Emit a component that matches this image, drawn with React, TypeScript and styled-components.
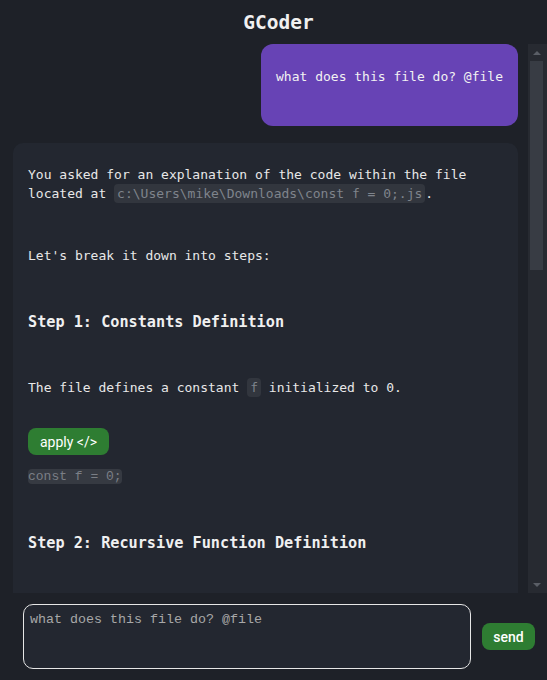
import React from "react";
import styled, { createGlobalStyle } from "styled-components";

const GlobalStyle = createGlobalStyle`
  html, body { margin: 0; padding: 0; height: 100%; background: #1e2128; }
  #root { height: 100%; }
`;

const Page = styled.div`
  height: 100vh;
  display: flex;
  flex-direction: column;
  font-family: "DejaVu Sans Mono", monospace;
  color: #e8e8e8;
  background: #1e2128;
`;

const Title = styled.h1`
  margin: 0;
  height: 44px;
  padding-left: 10px;
  display: flex;
  align-items: center;
  justify-content: center;
  font-size: 19.5px;
  font-weight: bold;
  color: #f0f0f0;
`;

const ChatRow = styled.div`
  flex: 1;
  min-height: 0;
  display: flex;
`;

const Messages = styled.div`
  flex: 1;
  min-width: 0;
  overflow-y: auto;
  scrollbar-width: none;
  &::-webkit-scrollbar { display: none; }
  padding: 0 10px 0 13px;
  display: flex;
  flex-direction: column;
  gap: 17px;
`;

const ScrollBar = styled.div`
  width: 19px;
  flex-shrink: 0;
  display: flex;
  flex-direction: column;
  background: #272a31;
`;

const ScrollArrow = styled.div<{ $down?: boolean }>`
  height: 17px;
  flex-shrink: 0;
  display: flex;
  align-items: center;
  justify-content: center;
  padding-right: 1px;
  &::after {
    content: "";
    width: 0;
    height: 0;
    border-left: 4px solid transparent;
    border-right: 4px solid transparent;
    ${(p) =>
      p.$down
        ? "border-top: 4px solid #5a5e66;"
        : "border-bottom: 4px solid #5a5e66;"}
  }
`;

const ScrollTrack = styled.div`
  flex: 1;
  padding: 0 4px 0 2px;
`;

const ScrollThumb = styled.div`
  height: 209px;
  background: #383c44;
`;

const UserBubble = styled.div`
  flex-shrink: 0;
  align-self: flex-end;
  white-space: nowrap;
  padding: 23px 15px 40px;
  background: #6743b5;
  border-radius: 12px;
  font-size: 13px;
  line-height: 19px;
  color: #f2f2f2;
`;

const BotBubble = styled.div`
  flex-shrink: 0;
  background: #232730;
  border-radius: 10px;
  padding: 22px 15px;
  font-size: 13px;
  line-height: 19px;
`;

const Para = styled.p<{ $gap?: number }>`
  margin: ${(p) => p.$gap ?? 43}px 0 0;
  &:first-child { margin-top: 0; }
`;

const Heading = styled.h3<{ $gap?: number }>`
  margin: ${(p) => p.$gap ?? 46}px 0 0;
  font-size: 15.2px;
  line-height: 22px;
  font-weight: bold;
  color: #f0f0f0;
`;

const InlineCode = styled.code`
  font-family: "DejaVu Sans Mono", monospace;
  font-size: 13px;
  background: #32363e;
  color: #7f848c;
  padding: 2px 3px;
  border-radius: 4px;
`;

const ActionButton = styled.button`
  height: 27px;
  border: none;
  border-radius: 8px;
  background: #2e7d32;
  color: #ffffff;
  font-family: Roboto, "Liberation Sans", sans-serif;
  font-size: 14px;
  cursor: pointer;
`;

const ApplyButton = styled(ActionButton)`
  display: block;
  margin-top: 31px;
  padding: 0 12px;
  font-weight: 400;
`;

const SendButton = styled(ActionButton)`
  width: 53px;
  padding: 0;
  font-weight: 500;
`;

const CodeBlock = styled.pre`
  margin: 14px 0 0;
  font-family: "Liberation Mono", monospace;
  font-size: 13px;
  line-height: 15px;
  color: #7b7f86;
  & > span {
    background: #363a42;
    border-radius: 4px;
  }
`;

const Footer = styled.div`
  flex-shrink: 0;
  height: 87px;
  box-sizing: border-box;
  display: flex;
  align-items: center;
  padding: 0 12px 0 23px;
  gap: 11px;
`;

const Input = styled.textarea`
  width: 448px;
  height: 65px;
  box-sizing: border-box;
  resize: none;
  background: #232730;
  border: 1px solid #e6e6e6;
  border-radius: 10px;
  padding: 7px 6px;
  font-family: "Liberation Mono", monospace;
  font-size: 13.33px;
  line-height: 16px;
  color: #a8a8a8;
  outline: none;
`;

export default function App() {
  return (
    <>
      <GlobalStyle />
      <Page>
        <Title>GCoder</Title>
        <ChatRow>
          <Messages>
            <UserBubble>what does this file do? @file</UserBubble>
            <BotBubble>
              <Para>
                You asked for an explanation of the code within the file located at{" "}
                <InlineCode>c:\Users\mike\Downloads\const f = 0;.js</InlineCode>.
              </Para>
              <Para>Let's break it down into steps:</Para>
              <Heading>Step 1: Constants Definition</Heading>
              <Para $gap={45}>
                The file defines a constant <InlineCode>f</InlineCode> initialized to 0.
              </Para>
              <ApplyButton>apply &lt;/&gt;</ApplyButton>
              <CodeBlock>
                <span>const f = 0;</span>
              </CodeBlock>
              <Heading $gap={48}>Step 2: Recursive Function Definition</Heading>
              <Para $gap={45}>
                A function <InlineCode>g</InlineCode> is declared that calls itself until its
                argument reaches <InlineCode>f</InlineCode>.
              </Para>
              <ApplyButton>apply &lt;/&gt;</ApplyButton>
              <CodeBlock>
                <span>function g(n) {"{"}</span>
                {"\n"}
                <span>  return n === f ? f : g(n - 1);</span>
                {"\n"}
                <span>{"}"}</span>
              </CodeBlock>
              <Heading $gap={48}>Step 3: Export</Heading>
              <Para $gap={45}>
                Finally, the function <InlineCode>g</InlineCode> is exported so other modules
                can use it.
              </Para>
              <Para>
                In summary, this file sets up a base value and a recursive helper that counts
                down to it.
              </Para>
            </BotBubble>
          </Messages>
          <ScrollBar>
            <ScrollArrow />
            <ScrollTrack>
              <ScrollThumb />
            </ScrollTrack>
            <ScrollArrow $down />
          </ScrollBar>
        </ChatRow>
        <Footer>
          <Input defaultValue="what does this file do? @file" />
          <SendButton>send</SendButton>
        </Footer>
      </Page>
    </>
  );
}
